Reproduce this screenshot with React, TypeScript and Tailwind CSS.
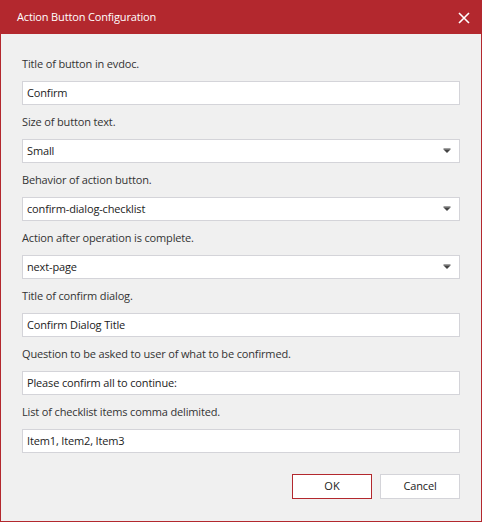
import React from 'react';

const font = { fontFamily: '"Open Sans", "Noto Sans", sans-serif' };

type Field = { label: string; value: string; select?: boolean };

const fields: Field[] = [
  { label: 'Title of button in evdoc.', value: 'Confirm' },
  { label: 'Size of button text.', value: 'Small', select: true },
  { label: 'Behavior of action button.', value: 'confirm-dialog-checklist', select: true },
  { label: 'Action after operation is complete.', value: 'next-page', select: true },
  { label: 'Title of confirm dialog.', value: 'Confirm Dialog Title' },
  { label: 'Question to be asked to user of what to be confirmed.', value: 'Please confirm all to continue:' },
  { label: 'List of checklist items comma delimited.', value: 'Item1, Item2, Item3' },
];

const Caret = () => (
  <svg width="8" height="6" viewBox="0 0 8 6" className="shrink-0">
    <rect x="0.5" y="0.5" width="7" height="1" fill="#444" />
    <path d="M0.5 1.5 L7.5 1.5 L4 5 Z" fill="#444" />
  </svg>
);

export default function App() {
  return (
    <div
      className="w-[482px] h-[522px] flex flex-col border border-[#b3282e] bg-[#f0f0f0] text-[#222] antialiased"
      style={font}
    >
      {/* Header */}
      <div className="h-[33px] shrink-0 bg-[#b3282e] flex items-center justify-between pl-[16px] pr-[11px]">
        <span className="text-white text-[11px] tracking-[-0.15px]">Action Button Configuration</span>
        <svg width="12" height="12" viewBox="0 0 12 12">
          <path d="M1 1 L11 11 M11 1 L1 11" stroke="#fff" strokeWidth="1.6" />
        </svg>
      </div>

      {/* Body */}
      <div className="flex-1 flex flex-col px-[21px] pt-[21px]">
        {fields.map((f) => (
          <div key={f.label} className="flex flex-col mb-[8px]">
            <label className="text-[11px] tracking-[-0.15px] leading-[18px] mb-[8px] text-[#333]">{f.label}</label>
            <div className="h-[24px] bg-white border border-[#d4d4d9] flex items-center justify-between pl-[4px] pr-[8px] text-[11px] tracking-[-0.15px] text-[#222]">
              <span>{f.value}</span>
              {f.select && <Caret />}
            </div>
          </div>
        ))}

        <div className="flex justify-end gap-[8px] mt-[13px]">
          <button className="w-[80px] h-[25px] bg-white border border-[#b3282e] text-[11px] text-[#222]">
            OK
          </button>
          <button className="w-[80px] h-[25px] bg-white border border-[#d4d4d9] text-[11px] tracking-[-0.15px] text-[#222]">
            Cancel
          </button>
        </div>
      </div>
    </div>
  );
}
